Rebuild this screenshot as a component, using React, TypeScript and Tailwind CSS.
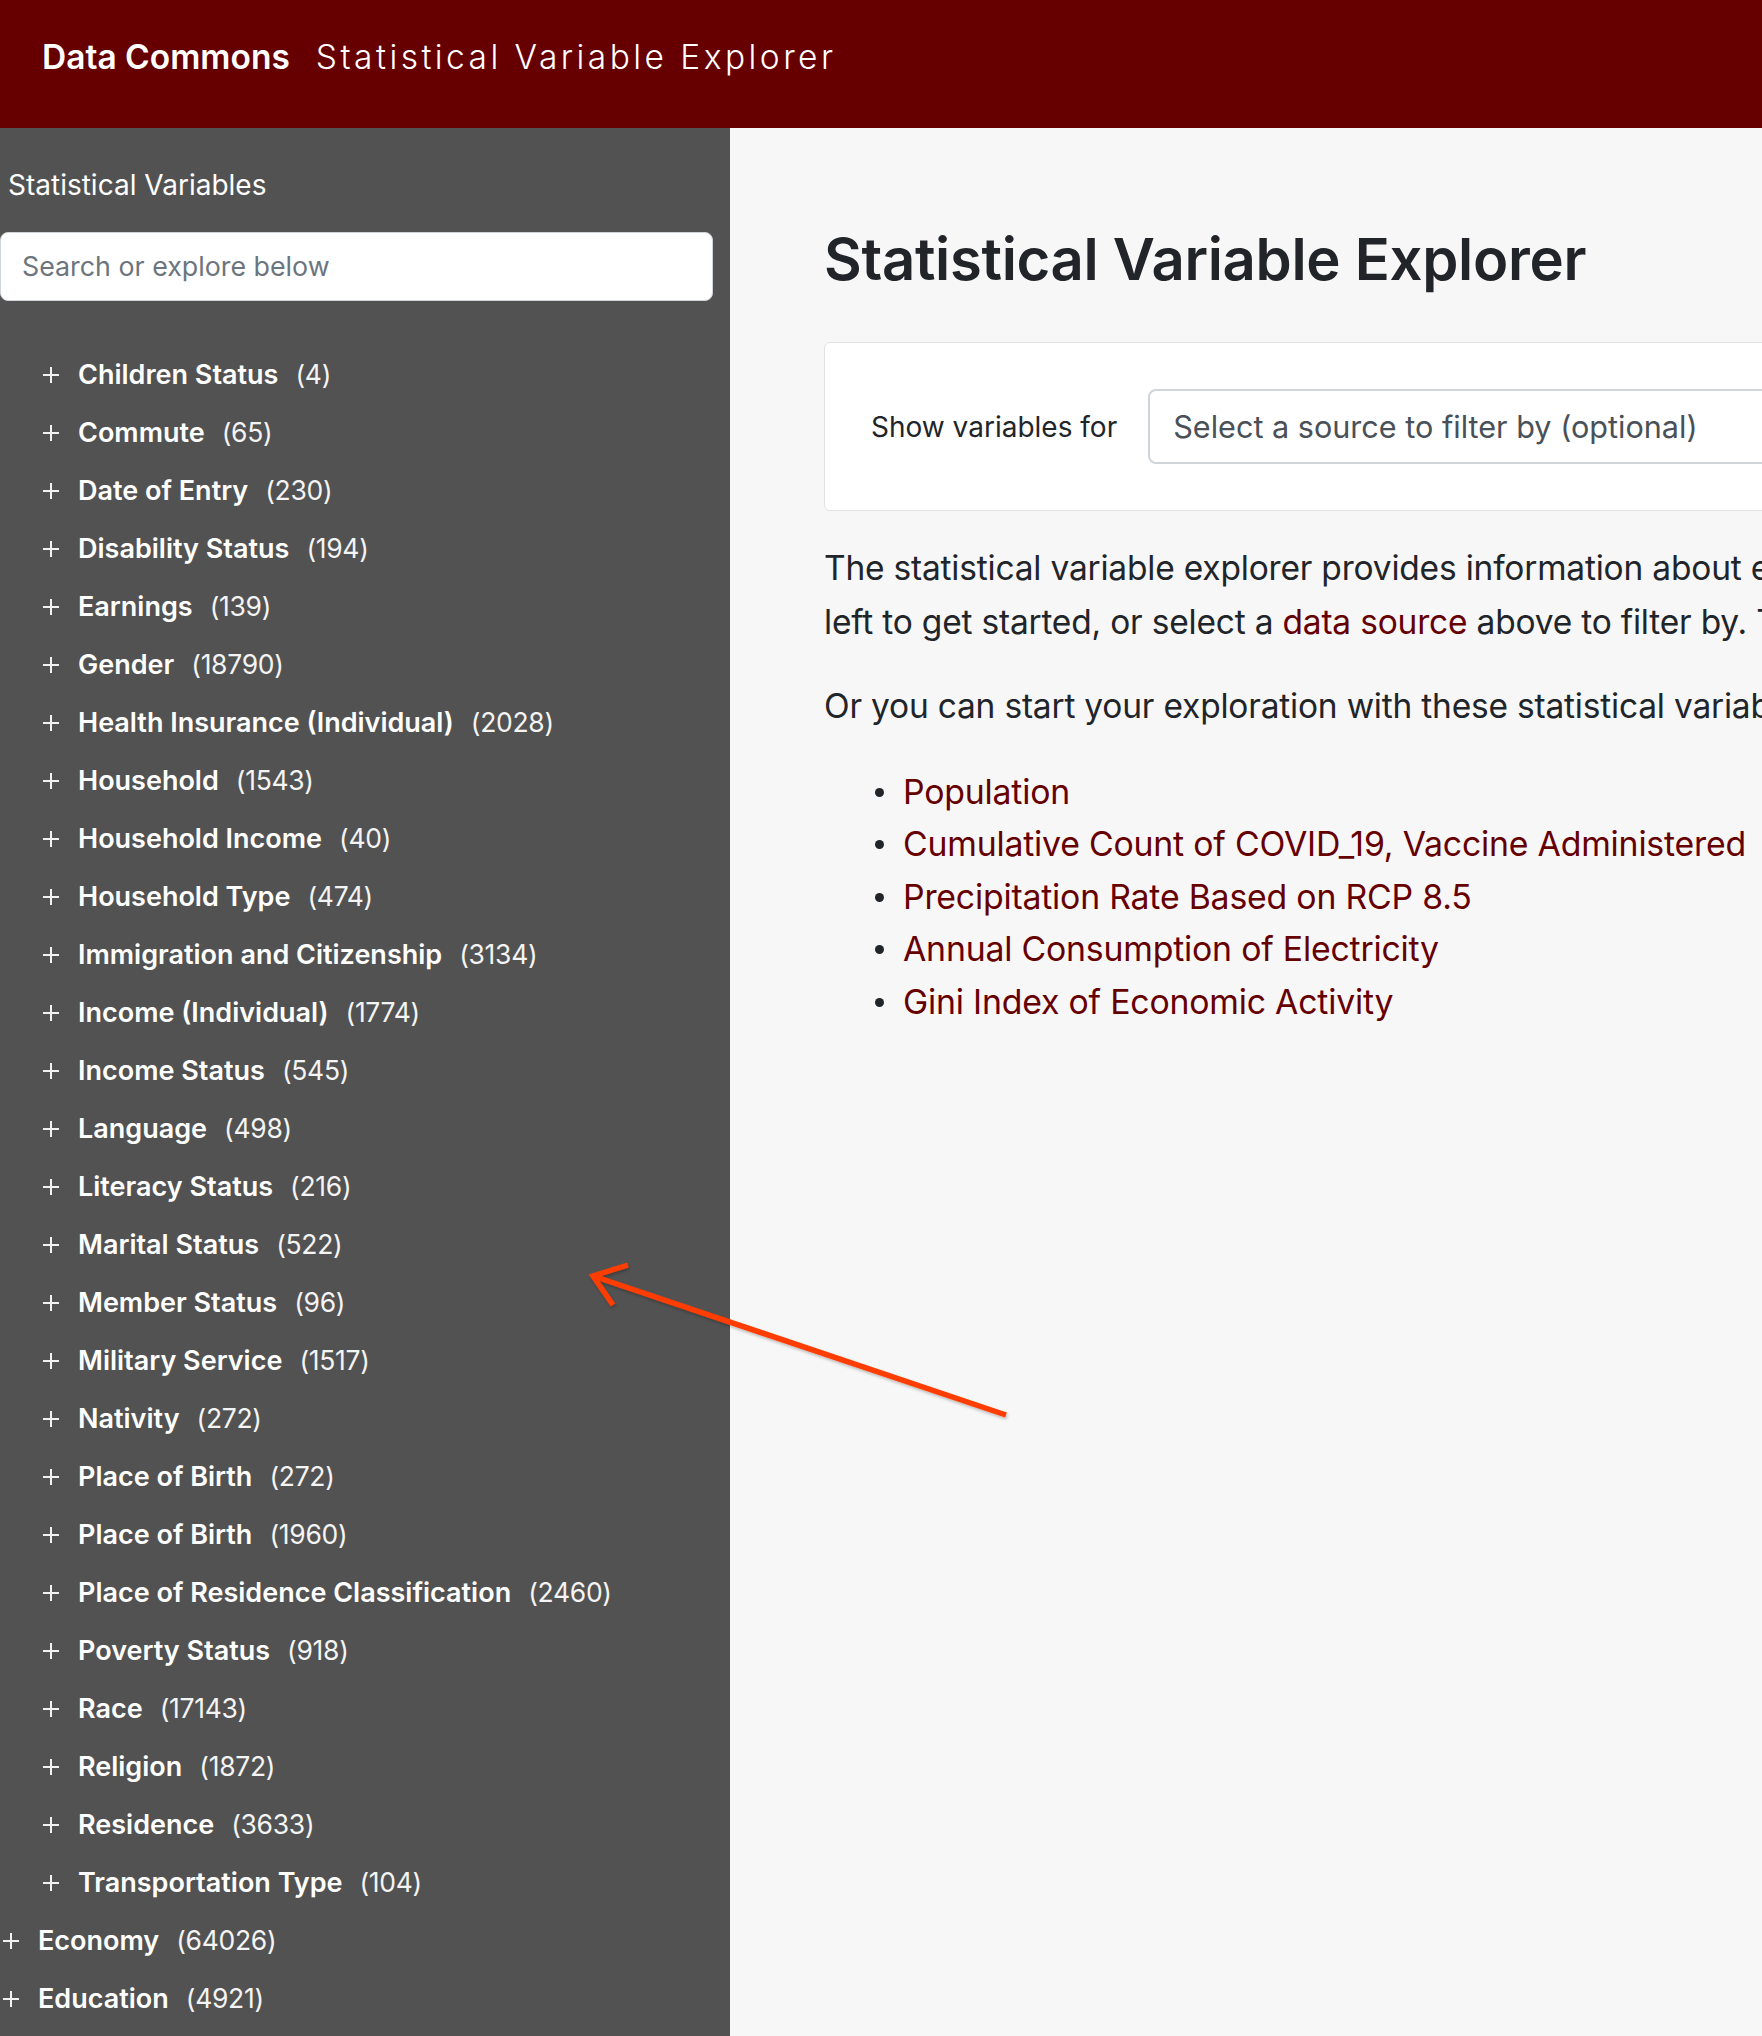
import React from 'react';

// Tree data for the sidebar
const nested: [string, number][] = [
  ['Children Status', 4],
  ['Commute', 65],
  ['Date of Entry', 230],
  ['Disability Status', 194],
  ['Earnings', 139],
  ['Gender', 18790],
  ['Health Insurance (Individual)', 2028],
  ['Household', 1543],
  ['Household Income', 40],
  ['Household Type', 474],
  ['Immigration and Citizenship', 3134],
  ['Income (Individual)', 1774],
  ['Income Status', 545],
  ['Language', 498],
  ['Literacy Status', 216],
  ['Marital Status', 522],
  ['Member Status', 96],
  ['Military Service', 1517],
  ['Nativity', 272],
  ['Place of Birth', 272],
  ['Place of Birth', 1960],
  ['Place of Residence Classification', 2460],
  ['Poverty Status', 918],
  ['Race', 17143],
  ['Religion', 1872],
  ['Residence', 3633],
  ['Transportation Type', 104],
];

const topLevel: [string, number][] = [
  ['Economy', 64026],
  ['Education', 4921],
];

const examples = [
  'Population',
  'Cumulative Count of COVID_19, Vaccine Administered',
  'Precipitation Rate Based on RCP 8.5',
  'Annual Consumption of Electricity',
  'Gini Index of Economic Activity',
];

const PlusIcon = () => (
  <svg width="18" height="18" viewBox="0 0 18 18" className="shrink-0">
    <path d="M9 1v16M1 9h16" stroke="#f2f2f2" strokeWidth="2" fill="none" />
  </svg>
);

const TreeRow: React.FC<{ label: string; count: number; nested?: boolean }> = ({ label, count, nested }) => (
  <div className={`h-[58px] flex items-center ${nested ? 'pl-[42px]' : 'pl-[2px]'}`}>
    <PlusIcon />
    <span className="ml-[18px] text-[27px] font-semibold text-white">{label}</span>
    <span className="ml-[17px] text-[26.5px] font-normal text-[#f4f4f4] tracking-[-0.3px]">({count})</span>
  </div>
);

export default function App() {
  return (
    <div className="relative w-[1762px] h-[2036px] overflow-hidden bg-[#f7f7f7] font-['Inter','Liberation_Sans',sans-serif] text-[#212529]">
      <header className="h-[128px] bg-[#660000] flex items-start pt-[37px] pl-[42px]">
        <span className="text-[33.5px] leading-[40px] font-semibold text-white">Data Commons</span>
        <span className="ml-[26px] text-[33.5px] leading-[40px] font-light text-white tracking-[3.45px]">
          Statistical Variable Explorer
        </span>
      </header>

      <div className="flex h-[1908px]">
        <aside className="w-[730px] shrink-0 bg-[#525252] pt-[40px]">
          <h2 className="pl-[8px] text-[28px] leading-[34px] font-normal text-white">Statistical Variables</h2>
          <div className="mt-[30px] w-[713px] h-[69px] bg-white border border-[#ced4da] rounded-[8px] flex items-center pl-[21px]">
            <span className="text-[26.8px] text-[#6c757d]">Search or explore below</span>
          </div>
          <div className="mt-[45px]">
            {nested.map(([label, count], i) => (
              <TreeRow key={i} label={label} count={count} nested />
            ))}
            {topLevel.map(([label, count], i) => (
              <TreeRow key={`t${i}`} label={label} count={count} />
            ))}
          </div>
        </aside>

        <main className="flex-1 min-w-0 pl-[94px] pt-[97px]">
          <h1 className="text-[58px] leading-[68px] font-semibold tracking-[-0.3px] whitespace-nowrap">Statistical Variable Explorer</h1>

          <div className="mt-[49px] w-[1200px] h-[169px] bg-white border border-[#e3e3e3] rounded-[6px] flex items-center pl-[46px]">
            <span className="text-[28px] whitespace-nowrap">Show variables for</span>
            <div className="ml-[31px] w-[900px] h-[75px] border-2 border-[#d0d5da] rounded-[8px] flex items-center pl-[23px]">
              <span className="text-[30.6px] text-[#495057] whitespace-nowrap">Select a source to filter by (optional)</span>
            </div>
          </div>

          <p className="mt-[30px] text-[33.5px] leading-[54px] tracking-[-0.2px] whitespace-nowrap">
            The statistical variable explorer provides information about each statistical variable in Data Commons. Browse the hierarchy on the
            <br />
            left to get started, or select a <span className="text-[#660000]">data source</span> above to filter by. To learn more, read the documentation.
          </p>

          <p className="mt-[30px] text-[33.5px] leading-[54px] tracking-[-0.2px] whitespace-nowrap">
            Or you can start your exploration with these statistical variables:
          </p>

          <ul className="mt-[33px] pl-[51px]">
            {examples.map((ex) => (
              <li key={ex} className="h-[52.5px] flex items-center">
                <span className="w-[9px] h-[9px] rounded-full bg-[#212529] shrink-0" />
                <span className="ml-[19px] text-[33.8px] text-[#660000] tracking-[-0.2px] whitespace-nowrap">{ex}</span>
              </li>
            ))}
          </ul>
        </main>
      </div>

      {/* annotation arrow drawn over the page */}
      <svg className="absolute left-0 top-0 pointer-events-none" width="1762" height="2036">
        <defs>
          <filter id="sh" x="-10%" y="-10%" width="120%" height="120%">
            <feDropShadow dx="1" dy="2" stdDeviation="1.5" floodColor="#000" floodOpacity="0.25" />
          </filter>
        </defs>
        <g stroke="#ff3d00" strokeWidth="5.5" fill="none" filter="url(#sh)">
          <path d="M1006 1415 L593 1276" />
          <path d="M628 1265 L593 1276 L613 1305" strokeLinejoin="miter" />
        </g>
      </svg>
    </div>
  );
}
